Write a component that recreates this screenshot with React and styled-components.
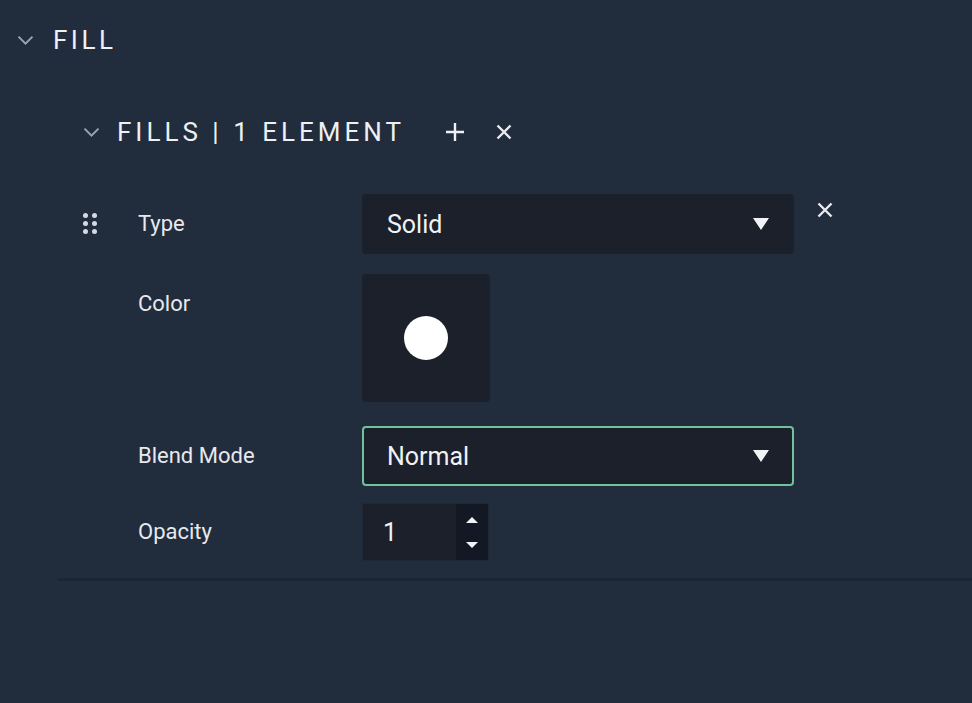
import React from 'react';
import styled, { createGlobalStyle } from 'styled-components';

const GlobalStyle = createGlobalStyle`
  html, body {
    margin: 0;
    padding: 0;
    background: #212c3c;
  }
  body {
    font-family: Roboto, "Liberation Sans", sans-serif;
    color: #e6e9ef;
  }
`;

const Panel = styled.div`
  width: 972px;
  height: 703px;
  background: #212c3c;
  overflow: hidden;
`;

const SectionHeader = styled.div`
  display: flex;
  align-items: center;
  height: 80px;
  padding-left: 17px;
`;

const Title = styled.span`
  font-size: ${p => p.size || 26}px;
  font-weight: 400;
  letter-spacing: ${p => p.spacing || 4}px;
  color: #eef0f4;
  margin-left: ${p => p.gap || 16}px;
  text-transform: uppercase;
`;

const Group = styled.div`
  margin-left: 58px;
  border-bottom: 3px solid #1b2533;
  padding-bottom: 17px;
`;

const GroupHeader = styled.div`
  display: flex;
  align-items: center;
  height: 60px;
  margin-top: 22px;
  padding-left: 25px;
`;

const HeaderActions = styled.div`
  display: flex;
  align-items: center;
  gap: 31px;
  margin-left: 40px;
`;

const IconButton = styled.button`
  display: flex;
  align-items: center;
  justify-content: center;
  background: none;
  border: 0;
  padding: 0;
  color: #eef0f4;
  cursor: pointer;
`;

const Rows = styled.div`
  display: flex;
  flex-direction: column;
`;

const Row = styled.div`
  display: grid;
  grid-template-columns: 55px 224px 432px auto;
  align-items: start;
  padding-left: 25px;
  margin-top: ${p => p.top}px;
`;

const Handle = styled.div`
  display: grid;
  grid-template-columns: repeat(2, 5px);
  gap: 3px 4px;
  margin-top: 19px;
`;

const Dot = styled.span`
  width: 5px;
  height: 5px;
  border-radius: 50%;
  background: #d6d9e0;
`;

const Label = styled.div`
  height: ${p => p.h || 60}px;
  line-height: ${p => p.h || 60}px;
  font-size: 22px;
  color: #e6e9ef;
`;

const Select = styled.div`
  box-sizing: border-box;
  height: 60px;
  display: flex;
  align-items: center;
  justify-content: space-between;
  padding: 0 23px 0 23px;
  background: #1b202a;
  border-radius: 4px;
  border: 2px solid ${p => (p.focused ? '#6ec39e' : '#1b202a')};
  font-size: 25px;
  color: #f0f2f6;
`;

const Caret = styled.span`
  width: 0;
  height: 0;
  border-left: 8px solid transparent;
  border-right: 8px solid transparent;
  border-top: 12px solid #f2f3f7;
`;

const ColorBox = styled.div`
  width: 128px;
  height: 128px;
  border-radius: 4px;
  background: #1b202a;
  display: flex;
  align-items: center;
  justify-content: center;
`;

const Swatch = styled.span`
  width: 44px;
  height: 44px;
  border-radius: 50%;
  background: #ffffff;
`;

const NumberInput = styled.div`
  box-sizing: border-box;
  width: 127px;
  height: 58px;
  display: flex;
  background: #1b202a;
  border: 1px solid #1f2735;
`;

const NumberValue = styled.div`
  flex: 1;
  display: flex;
  align-items: center;
  padding-left: 20px;
  font-size: 25px;
  color: #f0f2f6;
`;

const Spinner = styled.div`
  width: 32px;
  background: #121824;
  display: flex;
  flex-direction: column;
  align-items: center;
  justify-content: space-between;
  padding: 13px 0 12px;
  box-sizing: border-box;
`;

const Arrow = styled.span`
  width: 0;
  height: 0;
  border-left: 6px solid transparent;
  border-right: 6px solid transparent;
  ${p => (p.up ? 'border-bottom' : 'border-top')}: 6px solid #f2f3f7;
`;

const RemoveCell = styled.div`
  padding: 8px 0 0 23px;
`;

const Chevron = ({ size = 17 }) => (
  <svg width={size} height={size * 0.6} viewBox="0 0 17 10" fill="none">
    <path d="M1.5 1.5 L8.5 8.5 L15.5 1.5" stroke="#9ba3b0" strokeWidth="2" />
  </svg>
);

const Plus = () => (
  <svg width="20" height="20" viewBox="0 0 20 20">
    <path d="M10 1 V19 M1 10 H19" stroke="#eef0f4" strokeWidth="2.4" />
  </svg>
);

const Cross = ({ size = 16 }) => (
  <svg width={size} height={size} viewBox="0 0 16 16">
    <path d="M1.5 1.5 L14.5 14.5 M14.5 1.5 L1.5 14.5" stroke="#e8eaef" strokeWidth="2.4" />
  </svg>
);

export default function App() {
  return (
    <Panel>
      <GlobalStyle />
      <SectionHeader>
        <Chevron />
        <Title gap={19} spacing={3.5}>Fill</Title>
      </SectionHeader>
      <Group>
        <GroupHeader>
          <Chevron />
          <Title gap={17} spacing={4}>Fills | 1 Element</Title>
          <HeaderActions>
            <IconButton><Plus /></IconButton>
            <IconButton><Cross size={16} /></IconButton>
          </HeaderActions>
        </GroupHeader>
        <Rows>
          <Row top={32}>
            <Handle>
              {Array.from({ length: 6 }).map((_, i) => <Dot key={i} />)}
            </Handle>
            <Label>Type</Label>
            <Select>
              Solid
              <Caret />
            </Select>
            <RemoveCell>
              <IconButton><Cross /></IconButton>
            </RemoveCell>
          </Row>
          <Row top={20}>
            <span />
            <Label>Color</Label>
            <ColorBox>
              <Swatch />
            </ColorBox>
          </Row>
          <Row top={24}>
            <span />
            <Label>Blend Mode</Label>
            <Select focused>
              Normal
              <Caret />
            </Select>
          </Row>
          <Row top={17}>
            <span />
            <Label h={58}>Opacity</Label>
            <NumberInput>
              <NumberValue>1</NumberValue>
              <Spinner>
                <Arrow up />
                <Arrow />
              </Spinner>
            </NumberInput>
          </Row>
        </Rows>
      </Group>
    </Panel>
  );
}
